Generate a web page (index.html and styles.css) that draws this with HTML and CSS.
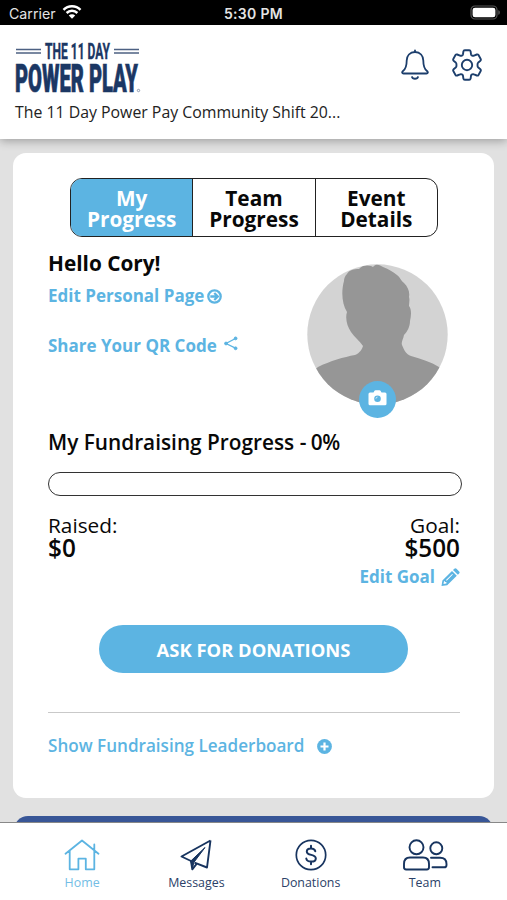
FILE: index.html
```html
<!DOCTYPE html>
<html lang="en">
<head>
  <meta charset="UTF-8" />
  <meta name="viewport" content="width=device-width, initial-scale=1" />
  <title>The 11 Day Power Play</title>
  <link rel="stylesheet" href="styles.css">
</head>
<body>
  <div class="status-bar">
    <div class="carrier">
      <span>Carrier</span>
      <svg width="20" height="16" viewBox="0 0 20 16" fill="none" stroke="#fff" stroke-width="2.5">
        <path d="M1.5 5.8a12 12 0 0 1 17 0M4.6 9a7.7 7.7 0 0 1 10.8 0" />
        <path d="M10 14.7l-3.2-3.2a4.6 4.6 0 0 1 6.4 0z" fill="#fff" stroke="none" />
      </svg>
    </div>
    <div class="clock">5:30 PM</div>
    <svg class="battery" width="31" height="16" viewBox="0 0 31 16">
      <rect x="1" y="1" width="26" height="13" rx="4" fill="none" stroke="#555" stroke-width="1.2" />
      <rect x="2.6" y="2.7" width="22.8" height="9.6" rx="2.4" fill="#fff" />
      <path d="M28.4 5.2c1.8.5 1.8 4.1 0 4.6z" fill="#666" />
    </svg>
  </div>

  <header>
    <div class="header-row">
      <svg class="logo" width="126" height="52" viewBox="0 0 126 52">
        <path d="M1 7.5h25M1 11h25M99 7.5h25M99 11h25" stroke="#4d6183" stroke-width="1.3" />
        <text class="logo-text" x="30" y="17" font-size="21.5" textLength="65" lengthAdjust="spacingAndGlyphs">THE 11 DAY</text>
        <text class="logo-text heavy" x="0" y="50" font-size="38" textLength="123" lengthAdjust="spacingAndGlyphs">POWER PLAY</text>
        <circle cx="123.500" cy="48.500" r="1.200" fill="none" stroke="#4d6183" stroke-width=".6" />
      </svg>
      <div class="header-icons">
        <svg width="28" height="32" viewBox="0 0 28 32" fill="none" stroke="#1c3e6c" stroke-width="1.800" stroke-linecap="round" stroke-linejoin="round">
          <path d="M14 1.300v1.500M14 3C8.800 3 5.700 6.800 5.700 11.500c0 5.800-.7 8.200-3.700 10.500-1.400 1.200-.9 2.500.5 2.500h23c1.400 0 1.900-1.300.5-2.500-3-2.300-3.700-4.700-3.700-10.500C22.300 6.800 19.200 3 14 3z" />
          <path d="M11 28c.6 2.300 5.400 2.300 6 0" />
        </svg>
        <svg width="32" height="32" viewBox="0 0 32 32" fill="none" stroke="#1c3e6c" stroke-width="1.900" stroke-linejoin="round">
          <path d="M12.400 2.400Q12.600 1.300 13.800 1.300h4.400q1.200 0 1.400 1.100l.4 2.800q.2 1 1.100 1.400 1 .4 1.900 0l2.800-1.100q1.100-.4 1.700.6l2.200 3.800q.6 1-.3 1.800l-2.100 1.700q-.9.800-.8 2.600-.1 1.800.8 2.600l2.100 1.700q.9.800.3 1.800l-2.200 3.800q-.6 1-1.700.6l-2.800-1.100q-.9-.4-1.900 0-.9.400-1.100 1.400l-.4 2.800q-.2 1.100-1.400 1.100h-4.400q-1.200 0-1.400-1.100l-.4-2.800q-.2-1-1.100-1.400-1-.4-1.900 0l-2.800 1.100q-1.100.4-1.700-.6l-2.200-3.800q-.6-1 .3-1.800l2.100-1.700q.9-.8.800-2.600.1-1.800-.8-2.600l-2.100-1.700q-.9-.8-.3-1.800l2.200-3.800q.6-1 1.700-.6l2.800 1.100q.9.400 1.900 0 .9-.4 1.100-1.400z" />
          <circle cx="16" cy="16" r="5.200" />
        </svg>
      </div>
    </div>
    <div class="event-name">The 11 Day Power Pay Community Shift 20...</div>
  </header>

  <main>
    <section class="card">
      <div class="tabs">
        <div class="tab active">My<br>Progress</div>
        <div class="tab">Team<br>Progress</div>
        <div class="tab">Event<br>Details</div>
      </div>

      <div class="profile">
        <div class="profile-info">
          <h2>Hello Cory!</h2>
          <a class="link edit-page"><span>Edit Personal Page</span>
            <svg width="15" height="15" viewBox="0 0 15 15" fill="none" stroke="#5cb4e2" stroke-width="2.300">
              <circle cx="7.500" cy="7.500" r="6.200" />
              <path d="M3.300 7.500h7M7.300 4l3.500 3.500L7.300 11" />
            </svg>
          </a>
          <a class="link share"><span>Share Your QR Code</span>
            <svg width="14" height="15" viewBox="0 0 14 15" fill="#5cb4e2" stroke="#5cb4e2">
              <path d="M11.500 2.500L2 7.500l9.500 4.700" fill="none" stroke-width="1.300" />
              <circle cx="11.600" cy="2.400" r="1.400" />
              <circle cx="2" cy="7.500" r="1.400" />
              <circle cx="11.600" cy="12.300" r="1.400" />
            </svg>
          </a>
        </div>
        <div class="avatar">
          <svg width="141" height="141" viewBox="0 0 141 141">
            <clipPath id="round"><circle cx="70.500" cy="70.500" r="70.200" /></clipPath>
            <g clip-path="url(#round)">
              <rect width="141" height="141" fill="#d3d3d3" />
              <path fill="#969696" d="M40 10c2-4 7-5 12-5 3-4 8-4 12-3l2 1c3-4 7-2 10 0 6 2 10 5 14 8 3 2 4 6 7 8 4 4 6 9 5 14 1 3 0 6 0 9 3 4 2 10 1 15 0 6-3 11-6 14-1 5-3 7-2 10 2 5 4 9 9 11 10 3 20 6 28 11l9 9v30H0v-30l11-9c12-6 26-10 37-12 5-2 7-6 8-9-3-5-9-9-12-14-4-6-6-14-4-20-5-8-6-20-3-31 0-3 1-5 3-7z" />
            </g>
          </svg>
          <span class="camera">
            <svg width="19" height="16" viewBox="0 0 19 16">
              <path fill="#fff" d="M2 2.500h3.500l1-1.700Q6.800.3 7.500.3h4q.7 0 1 .5l1 1.700H17q1.500 0 1.500 1.500v9.800q0 1.500-1.500 1.500H2q-1.500 0-1.500-1.500V4q0-1.500 1.500-1.500z" />
              <circle cx="9.500" cy="8.700" r="3.300" fill="#5cb4e2" />
              <path d="M7.900 8.700q0-1.600 1.600-1.600" stroke="#fff" stroke-width=".7" fill="none" />
            </svg>
          </span>
        </div>
      </div>

      <h3>My Fundraising Progress <span class="percent">- 0%</span></h3>
      <div class="progress-bar"></div>

      <div class="totals">
        <div>
          <div class="label">Raised:</div>
          <div class="amount">$0</div>
        </div>
        <div class="goal">
          <div class="label">Goal:</div>
          <div class="amount">$500</div>
          <a class="link edit-goal"><span>Edit Goal</span>
            <svg width="19" height="19" viewBox="0 0 19 19" fill="#5cb4e2">
              <path fill-rule="evenodd" d="M.5 18l.9-5.500L11 3l4.800 4.800-9.600 9.500zM3 13.300l-.5 2.700 2.900-.6v-1.500H4v-.6zM5 12.100l.7.700 6.200-6.200-.7-.7z" />
              <path d="M12 2l1.300-1.200q1.100-1 2.200 0l2.600 2.600q1.100 1.100 0 2.200L16.900 6.800z" />
            </svg>
          </a>
        </div>
      </div>

      <button class="donate">ASK FOR DONATIONS</button>

      <div class="leaderboard">
        <span>Show Fundraising Leaderboard</span>
        <svg width="15" height="15" viewBox="0 0 15 15">
          <circle cx="7.500" cy="7.500" r="7.400" fill="#5cb4e2" />
          <path d="M7.500 3.500v8M3.500 7.500h8" stroke="#fff" stroke-width="2.200" />
        </svg>
      </div>
    </section>
    <section class="next-card"></section>
  </main>

  <nav>
    <a class="nav-item current">
      <svg width="36" height="32" viewBox="0 0 36 32" fill="none" stroke="#5cb4e2" stroke-width="1.800" stroke-linejoin="round" stroke-linecap="round">
        <path d="M1.500 14.800L18 1.500l16.500 13.300M30.300 11V5.500M5.700 12v18.300h8.700V19.700h7.400v10.600h8.500V12" />
      </svg>
      <span>Home</span>
    </a>
    <a class="nav-item">
      <svg width="32" height="32" viewBox="0 0 32 32" fill="none" stroke="#17345f" stroke-width="1.900" stroke-linejoin="round">
        <path d="M30.500 1.500L1.500 17.500l9.500 4.500M14.500 23.600L27 28.500l3.500-27M11 22l1.300 8.300 4.500-5.700" />
        <path d="M25 8.500L10.800 22l1.800 7 1.200-5.500z" fill="#17345f" stroke-width="1" />
      </svg>
      <span>Messages</span>
    </a>
    <a class="nav-item">
      <svg width="32" height="32" viewBox="0 0 32 32" fill="none" stroke="#17345f" stroke-width="1.700" stroke-linecap="round">
        <circle cx="16" cy="16" r="14.700" />
        <path stroke-width="2" d="M20.300 12.200c-.4-1.800-2-2.800-4.300-2.800-2.600 0-4.200 1.200-4.200 3 0 4.600 9 2.300 9 7 0 2-1.900 3.200-4.700 3.200-2.600 0-4.400-1-4.800-3M16 6.800v2.600M16 22.600v2.600" />
      </svg>
      <span>Donations</span>
    </a>
    <a class="nav-item">
      <svg width="46" height="32" viewBox="0 0 46 32" fill="none" stroke="#17345f" stroke-width="1.900" stroke-linecap="round" stroke-linejoin="round">
        <circle cx="14.500" cy="8.300" r="7" />
        <path d="M8 18.500h13q6 0 6 6.500v3.300q0 2.200-2.200 2.200H4.200Q2 30.500 2 28.300V25q0-6.500 6-6.500z" />
        <circle cx="34.300" cy="9.300" r="6" />
        <path d="M29 18.700h9q6.500 0 6.500 6.200v1q0 2.400-2.300 2.400H30.500" />
      </svg>
      <span>Team</span>
    </a>
  </nav>
</body>
</html>
```
FILE: styles.css
```css
* {
  box-sizing: border-box;
}

body {
  margin: 0;
  height: 900px;
  display: flex;
  flex-direction: column;
  overflow: hidden;
  font-family: 'Open Sans', 'Noto Sans', sans-serif;
  background-color: #e1e1e1;
  color: #080808;
}

svg {
  display: block;
  flex-shrink: 0;
}

/* Status bar */
.status-bar {
  height: 25px;
  flex-shrink: 0;
  display: grid;
  grid-template-columns: 1fr auto 1fr;
  align-items: center;
  padding: 2px 6px 0 9px;
  background: #000;
  color: #e4e4e4;
  font-family: Inter, sans-serif;
  font-size: 14.2px;
}

.carrier {
  display: flex;
  align-items: center;
  gap: 6px;
}

.carrier svg {
  margin-top: -4px;
}

.clock {
  margin-left: -3px;
  font-weight: 600;
  font-size: 14px;
  letter-spacing: 0.3px;
}

.battery {
  justify-self: end;
  margin-top: -1px;
}

/* Header */
header {
  position: relative;
  height: 114px;
  flex-shrink: 0;
  padding: 17px 24px 0 15px;
  background: #fff;
  box-shadow: 0 2px 9px rgba(0, 0, 0, 0.3);
}

.header-row {
  display: flex;
  justify-content: space-between;
}

.logo {
  overflow: visible;
}

.logo-text {
  font-family: Roboto, sans-serif;
  font-weight: 700;
  fill: #1b3764;
  stroke: #1b3764;
  stroke-width: 0.4px;
}

.logo-text.heavy {
  font-weight: 900;
  stroke-width: 0.7px;
}

.header-icons {
  display: flex;
  gap: 22px;
  padding-top: 7px;
}

.event-name {
  margin-top: 8px;
  line-height: 20px;
  font-size: 15.85px;
  color: #222;
}

/* Main card */
main {
  flex: 1;
  min-height: 0;
  padding: 14px 13px 0;
  overflow: hidden;
}

.card {
  height: 645px;
  padding: 25px 34px 0 35px;
  background: #fff;
  border-radius: 13px;
}

.tabs {
  display: flex;
  width: 368px;
  height: 59px;
  margin-left: 22px;
  border: 1.5px solid #222;
  border-radius: 12px;
  overflow: hidden;
}

.tab {
  flex: 1;
  padding-top: 9px;
  text-align: center;
  font-size: 20.8px;
  font-weight: 700;
  line-height: 20.5px;
}

.tab + .tab {
  border-left: 1px solid #222;
}

.tab.active {
  background: #5cb4e2;
  color: #fff;
}

.profile {
  display: flex;
  justify-content: space-between;
  height: 181px;
  padding-right: 12px;
}

h2 {
  margin: 11px 0 0;
  font-size: 20.8px;
  line-height: 30px;
}

.link {
  display: flex;
  align-items: center;
  gap: 3px;
  color: #5cb4e2;
  font-size: 17px;
  font-weight: 700;
  line-height: 24px;
}

.edit-page {
  margin-top: 6px;
}

.share {
  margin-top: 26px;
  gap: 7px;
}

.share svg {
  margin-top: -6px;
}

.avatar {
  position: relative;
  margin-top: 27px;
  height: 141px;
}

.camera {
  position: absolute;
  left: 52px;
  bottom: -13px;
  width: 37px;
  height: 37px;
  display: flex;
  align-items: center;
  justify-content: center;
  padding-bottom: 4px;
  background: #5cb4e2;
  border-radius: 50%;
}

h3 {
  margin: 8px 0 0;
  font-size: 20.8px;
  font-weight: 600;
  line-height: 32px;
}

.percent {
  letter-spacing: -0.5px;
}

.progress-bar {
  width: 414px;
  height: 24px;
  margin-top: 14px;
  border: 1.5px solid #333;
  border-radius: 12px;
}

.totals {
  display: flex;
  justify-content: space-between;
  height: 129px;
  padding-top: 17px;
}

.label {
  font-size: 20.8px;
  line-height: 24px;
}

.amount {
  font-size: 24.3px;
  font-weight: 600;
  line-height: 22px;
}

.goal {
  text-align: right;
}

.edit-goal {
  margin-top: 6px;
  gap: 6px;
}

.donate {
  display: block;
  width: 309px;
  height: 48px;
  margin: 0 0 0 51px;
  border: none;
  border-radius: 24px;
  background: #5cb4e2;
  color: #fff;
  font-family: inherit;
  font-size: 18.4px;
  font-weight: 700;
}

.leaderboard {
  display: flex;
  align-items: center;
  gap: 13px;
  margin-top: 39px;
  padding-top: 21px;
  border-top: 1px solid #c9c9c9;
  color: #5cb4e2;
  font-size: 17.1px;
  font-weight: 600;
  line-height: 24px;
}

.next-card {
  height: 60px;
  margin: 18px 1px 0;
  border-radius: 14px;
  background: #385697;
}

/* Bottom navigation */
nav {
  position: relative;
  display: flex;
  height: 78px;
  flex-shrink: 0;
  padding: 16px 25px 0;
  border-top: 1px solid #888;
  background: #fff;
}

.nav-item {
  flex: 1;
  display: flex;
  flex-direction: column;
  align-items: center;
  gap: 3px;
  color: #2b4168;
  font-size: 12.4px;
  line-height: 17px;
}

.nav-item.current {
  color: #73bde5;
}
```
